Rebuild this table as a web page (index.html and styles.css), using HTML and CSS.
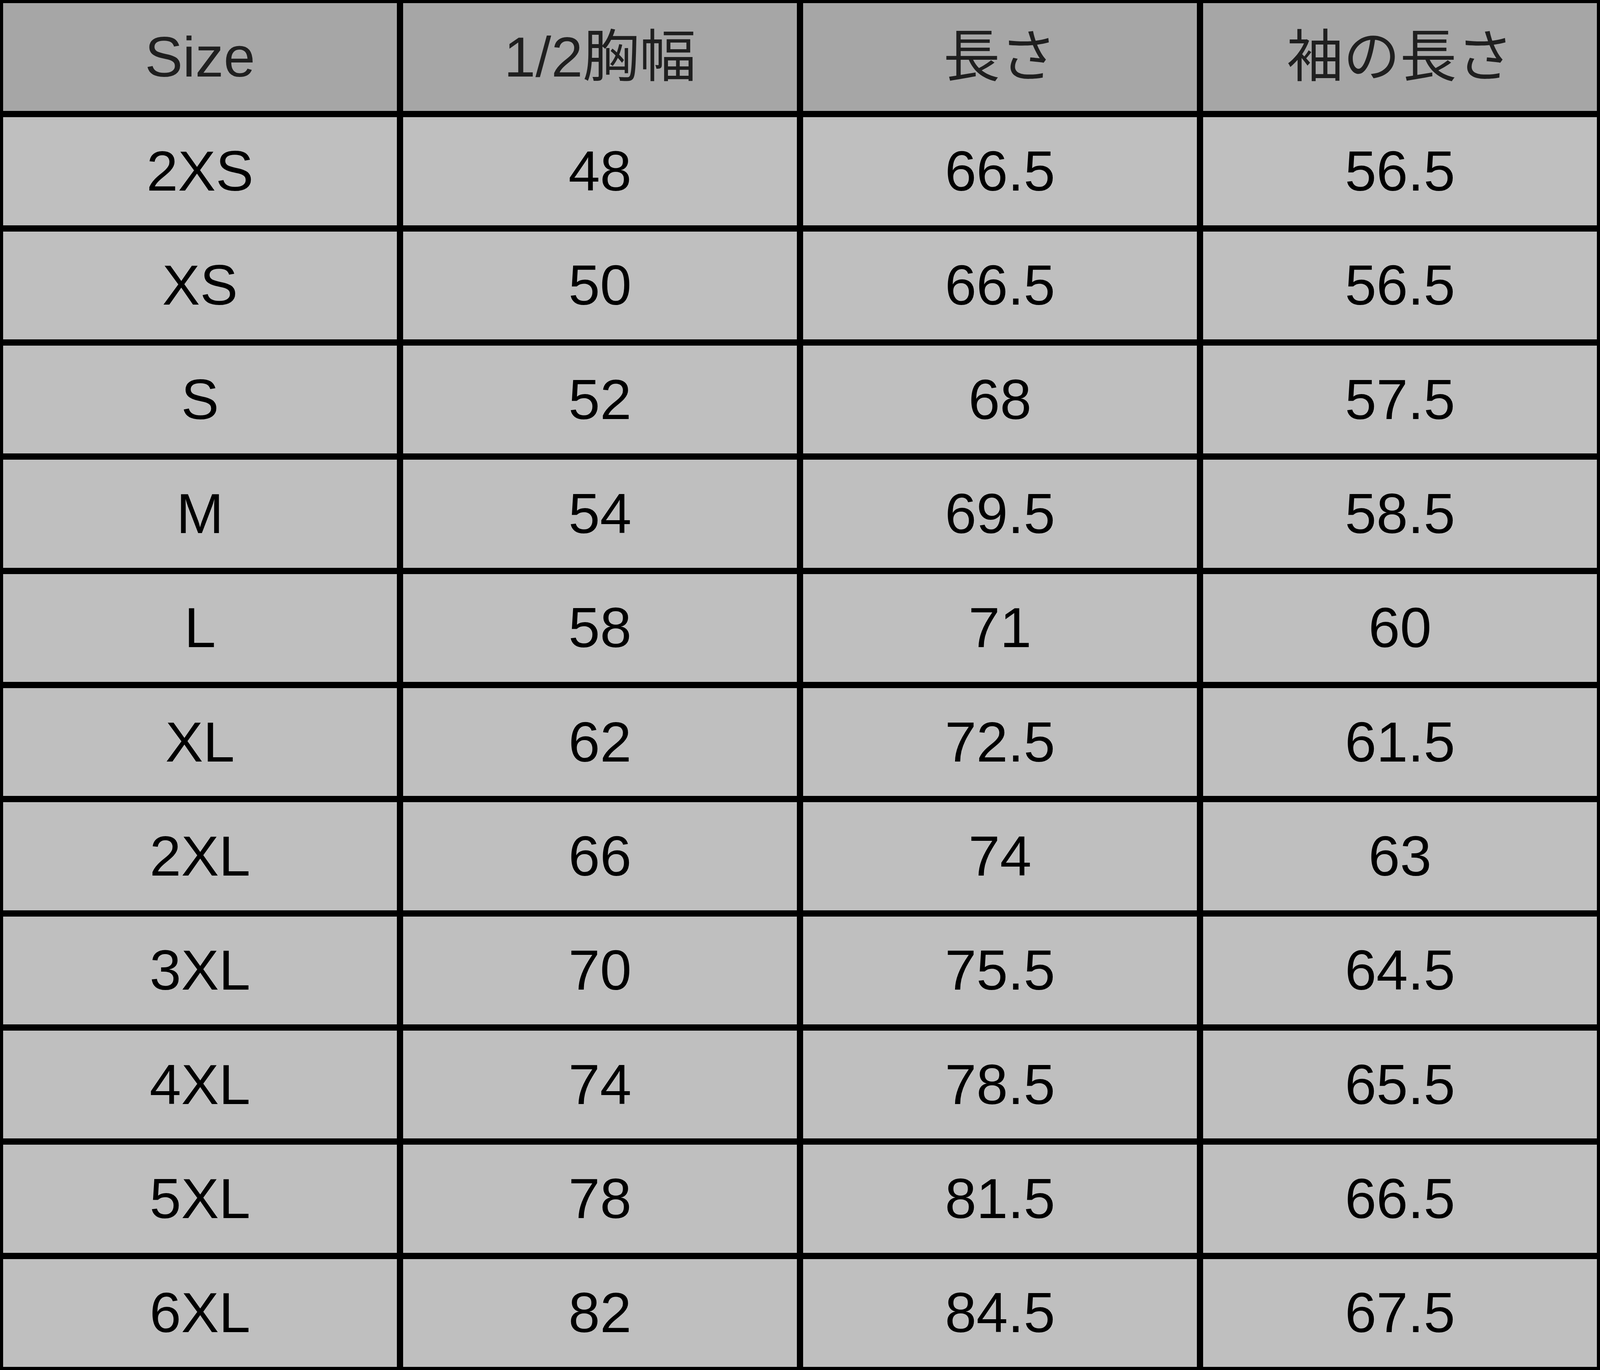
FILE: index.html
```html
<!DOCTYPE html>
<html lang="ja">
<head>
<meta charset="utf-8">
<title>Size chart</title>
<link rel="stylesheet" href="styles.css">
</head>
<body>
<div class="chart" role="table">
  <div class="cell head" role="columnheader">Size</div>
  <div class="cell head" role="columnheader">1/2胸幅</div>
  <div class="cell head" role="columnheader">長さ</div>
  <div class="cell head" role="columnheader">袖の長さ</div>

  <div class="cell">2XS</div><div class="cell">48</div><div class="cell">66.5</div><div class="cell">56.5</div>
  <div class="cell">XS</div><div class="cell">50</div><div class="cell">66.5</div><div class="cell">56.5</div>
  <div class="cell">S</div><div class="cell">52</div><div class="cell">68</div><div class="cell">57.5</div>
  <div class="cell">M</div><div class="cell">54</div><div class="cell">69.5</div><div class="cell">58.5</div>
  <div class="cell">L</div><div class="cell">58</div><div class="cell">71</div><div class="cell">60</div>
  <div class="cell">XL</div><div class="cell">62</div><div class="cell">72.5</div><div class="cell">61.5</div>
  <div class="cell">2XL</div><div class="cell">66</div><div class="cell">74</div><div class="cell">63</div>
  <div class="cell">3XL</div><div class="cell">70</div><div class="cell">75.5</div><div class="cell">64.5</div>
  <div class="cell">4XL</div><div class="cell">74</div><div class="cell">78.5</div><div class="cell">65.5</div>
  <div class="cell">5XL</div><div class="cell">78</div><div class="cell">81.5</div><div class="cell">66.5</div>
  <div class="cell">6XL</div><div class="cell">82</div><div class="cell">84.5</div><div class="cell">67.5</div>
</div>
</body>
</html>
```
FILE: styles.css
```css
html, body {
  margin: 0;
  padding: 0;
  background: #000;
  overflow: hidden;
}

.chart {
  display: grid;
  grid-template-columns: repeat(4, 1fr);
  grid-template-rows: repeat(12, 1fr);
  width: 100vw;
  height: 100vh;
}

.cell {
  box-sizing: border-box;
  border: 8px solid #000;
  background: #bfbfbf;
  color: #000;
  display: flex;
  align-items: center;
  justify-content: center;
  font-family: "Liberation Sans", "Noto Sans CJK JP", sans-serif;
  font-size: 145px;
  line-height: 1;
  white-space: nowrap;
}

.head {
  background: #a6a6a6;
  color: #1f1f1f;
}
```
